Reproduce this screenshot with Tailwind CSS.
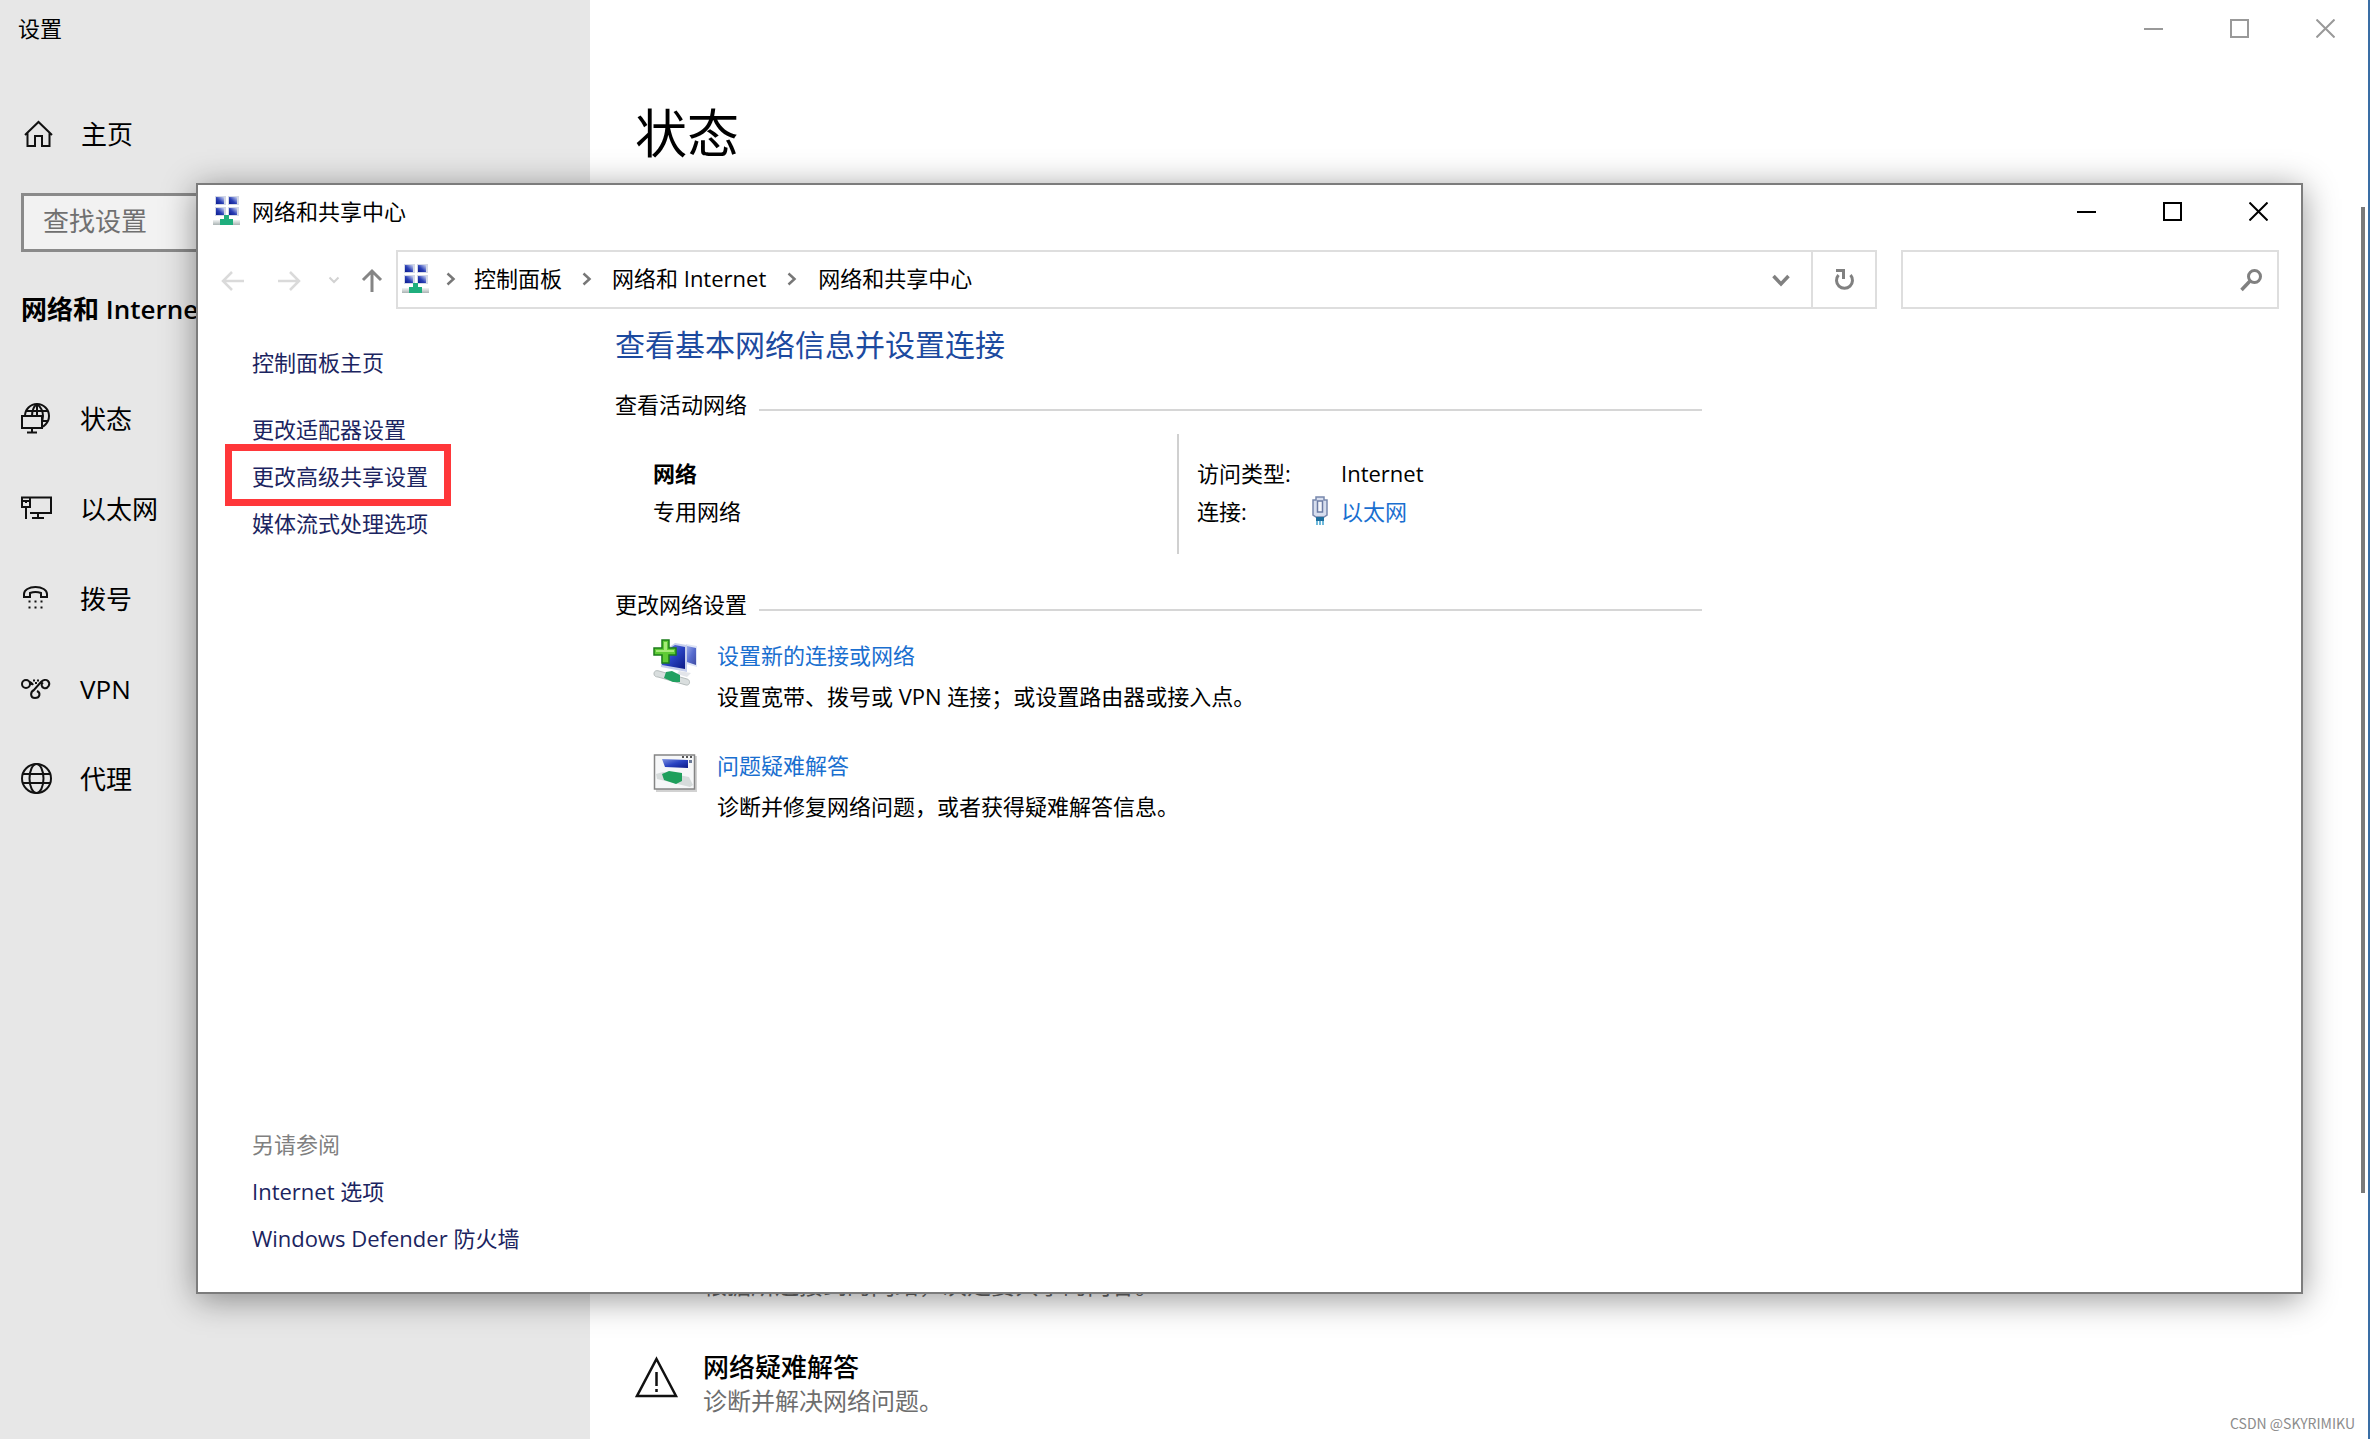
<!DOCTYPE html>
<html lang="zh-CN">
<head>
<meta charset="utf-8">
<meta name="viewport" content="width=device-width, initial-scale=1">
<title>设置</title>
<script src="https://cdn.jsdelivr.net/npm/@tailwindcss/browser@4"></script>
</head>
<body class="bg-white font-['Open_Sans','Noto_Sans_CJK_SC',sans-serif] text-black">

<!-- Shared symbols -->
<svg class="absolute size-0" aria-hidden="true">
  <defs>
    <linearGradient id="screen" x1="0" y1="1" x2="1" y2="0">
      <stop offset="0" stop-color="#0a1a8c"/><stop offset=".45" stop-color="#2a3fb5"/><stop offset="1" stop-color="#c9d3f3"/>
    </linearGradient>
    <linearGradient id="screenV" x1="0" y1="0" x2="1" y2="1">
      <stop offset="0" stop-color="#7f93e0"/><stop offset=".5" stop-color="#2943c2"/><stop offset="1" stop-color="#0c1a86"/>
    </linearGradient>
    <linearGradient id="pipe" x1="0" y1="0" x2="0" y2="1">
      <stop offset="0" stop-color="#f2f4f4"/><stop offset="1" stop-color="#a9b3b3"/>
    </linearGradient>
    <symbol id="monitor" viewBox="0 0 11 9">
      <path d="M0 0h11v9H0z" fill="#d3d8e6"/><path d="M1 1h8v7H1z" fill="url(#screen)"/>
    </symbol>
    <symbol id="network" viewBox="0 0 27 30">
      <use href="#monitor" x="2" y="0" width="11" height="9"/><use href="#monitor" x="15" y="0" width="11" height="9"/>
      <use href="#monitor" x="2" y="11" width="11" height="9"/><use href="#monitor" x="15" y="11" width="11" height="9"/>
      <path d="M0 24h27v5H0z" fill="url(#pipe)"/>
      <path d="M11 19h5v4h4v6H7v-6h4z" fill="#1fae7d"/>
    </symbol>
    <symbol id="min" viewBox="0 0 19 19"><path d="M0 10h19" stroke="currentColor" stroke-width="2"/></symbol>
    <symbol id="max" viewBox="0 0 19 19"><path d="M1 1h17v17H1z" fill="none" stroke="currentColor" stroke-width="2"/></symbol>
    <symbol id="close" viewBox="0 0 19 19"><path d="M.5 .5l18 18M18.500 .5l-18 18" stroke="currentColor" stroke-width="2"/></symbol>
    <symbol id="crumb" viewBox="0 0 12 16"><path d="M2.500 2.500L8.500 8l-6 5.500" fill="none" stroke="#777" stroke-width="2.500"/></symbol>
  </defs>
</svg>

<div class="relative flex min-h-screen border-r-2 border-[#3a6ea5]">

  <!-- Settings sidebar -->
  <aside class="w-[590px] shrink-0 bg-[#e7e7e7] text-[26px] leading-10">
    <div class="flex h-14 items-center pl-[18px] text-[22px]">设置</div>
    <a href="#" class="mt-12 flex h-[60px] items-center pl-[21px]">
      <svg class="mr-7 h-8 w-8" viewBox="0 0 32 32" fill="none" stroke="#111" stroke-width="2"><path d="M4 17L17.500 4 31 17M6.500 15v13H14v-10h7v10h7.500V15"/></svg>
      主页
    </a>
    <div class="mx-[21px] mt-[29px]">
      <input type="text" aria-label="查找设置" placeholder="查找设置" class="block h-[59px] w-full border-[3px] border-[#8a8a8a] bg-[#f2f2f2] px-[19px] pb-1 placeholder:text-[#707070]">
    </div>
    <h2 class="mt-[37px] h-10 pl-[21px] font-semibold">网络和 Internet</h2>
    <nav class="mt-[45px]">
      <a href="#" class="flex h-[90px] items-center pl-5">
        <svg class="mr-7 h-8 w-8" viewBox="0 0 32 32" fill="none" stroke="#111" stroke-width="2"><circle cx="17" cy="13" r="12"/><path d="M17 1c-4 3-5 7-5 12M17 1c5 4 6 8 6 12s-1 7-3 10M6 8h22M22 18h6M17 1v12"/><path d="M2 13h20v12H2z" fill="#e7e7e7"/><path d="M12 25v4M7 29.500h10"/></svg>
        状态
      </a>
      <a href="#" class="flex h-[90px] items-center pl-5">
        <svg class="mr-7 h-8 w-8" viewBox="0 0 32 32" fill="none" stroke="#111" stroke-width="2"><path d="M10 4.500h21V20H10M2 4.500h8V14H2zM3 8h6M6 8v2M6 14v12M18 20v5M12 25h12"/></svg>
        以太网
      </a>
      <a href="#" class="flex h-[90px] items-center pl-5">
        <svg class="mr-7 h-8 w-8" viewBox="0 0 32 32" fill="none" stroke="#111" stroke-width="2"><path d="M4 14v-3c0-4 5-7 11.500-7S27 7 27 11v3h-6v-4c-3-1-8-1-11 0v4z"/><path d="M8.500 18.500h2m4 0h2m4 0h2M8.500 24.500h2m4 0h2m4 0h2"/></svg>
        拨号
      </a>
      <a href="#" class="flex h-[90px] items-center pl-5">
        <svg class="mr-7 h-8 w-8" viewBox="0 0 32 32" fill="none" stroke="#111" stroke-width="2"><circle cx="6" cy="11" r="4"/><path d="M10 11h3M9 9c2 0 3 1 4 3"/><path d="M28 8c-2-2-5-1-7 1l-7 8c-4 2-4 8 1 8s6-5 2-7M28 8c3 3 0 8-4 7-3-1-3-4-1-5.500"/><path d="M13 7.500h2M17 7.500h2M15 10h2"/></svg>
        VPN
      </a>
      <a href="#" class="flex h-[90px] items-center pl-5">
        <svg class="mr-7 h-8 w-8" viewBox="0 0 32 32" fill="none" stroke="#111" stroke-width="2"><circle cx="16.500" cy="15.500" r="14.500"/><ellipse cx="16.500" cy="15.500" rx="7" ry="14.500"/><path d="M3 11h27M3 20h27"/></svg>
        代理
      </a>
    </nav>
  </aside>

  <!-- Settings page -->
  <main class="flex min-w-0 flex-1 flex-col">
    <div class="flex h-14 justify-end text-[#999]">
      <button type="button" aria-label="最小化" class="grid w-[86px] place-items-center"><svg class="size-[19px]"><use href="#min"/></svg></button>
      <button type="button" aria-label="最大化" class="grid w-[86px] place-items-center"><svg class="size-[19px]"><use href="#max"/></svg></button>
      <button type="button" aria-label="关闭" class="grid w-[86px] place-items-center"><svg class="size-[19px]"><use href="#close"/></svg></button>
    </div>
    <h1 class="mt-[37px] pl-[45px] text-[52px] leading-[80px]">状态</h1>
    <div class="mt-auto pb-[21px] pl-[45px] leading-[34px]">
      <p class="pl-[68px] text-[24px] text-[#666]">根据所连接到的网络，决定要共享的内容。</p>
      <a href="#" class="mt-12 flex">
        <svg class="mt-1 mr-6 h-11 w-11 shrink-0" viewBox="0 0 44 44" fill="none" stroke="#111" stroke-width="2.500"><path d="M21.500 5L41 42H2zM21.500 18v14M21.500 35v3"/></svg>
        <span>
          <span class="block text-[26px] font-medium">网络疑难解答</span>
          <span class="block text-[24px] text-[#6e6e6e]">诊断并解决网络问题。</span>
        </span>
      </a>
    </div>
  </main>

  <div class="absolute top-[207px] right-[3px] bottom-[246px] w-1 bg-[#7a7a7a]"></div>
  <div class="absolute right-[13px] bottom-1 font-['Noto_Sans_CJK_SC',sans-serif] text-[14px] leading-6 text-[#8c8c8c]">CSDN @SKYRIMIKU</div>

  <!-- Network and Sharing Center window -->
  <section class="absolute top-[183px] right-[65px] bottom-[145px] left-[196px] flex flex-col border-2 border-[#7c7c7c] bg-white text-[22px] shadow-[0_5px_32px_rgba(0,0,0,0.42)]">
    <header class="flex h-[52px] items-center">
      <svg class="ml-[15px] h-[30px] w-[27px]"><use href="#network"/></svg>
      <span class="ml-3 flex-1">网络和共享中心</span>
      <button type="button" aria-label="最小化" class="grid h-full w-[86px] place-items-center"><svg class="size-[19px]"><use href="#min"/></svg></button>
      <button type="button" aria-label="最大化" class="grid h-full w-[86px] place-items-center"><svg class="size-[19px]"><use href="#max"/></svg></button>
      <button type="button" aria-label="关闭" class="grid h-full w-[86px] place-items-center"><svg class="size-[19px]"><use href="#close"/></svg></button>
    </header>

    <div class="mt-[13px] flex h-[59px] items-center pr-[22px] pl-[23px]">
      <button type="button" aria-label="后退" class="mr-8"><svg class="size-6" viewBox="0 0 24 24" fill="none" stroke="#dadada" stroke-width="2.500"><path d="M23 13H3M11 4l-9 9 9 9"/></svg></button>
      <button type="button" aria-label="前进" class="mr-[27px]"><svg class="size-6" viewBox="0 0 24 24" fill="none" stroke="#dadada" stroke-width="2.500"><path d="M1 13h20M13 4l9 9-9 9"/></svg></button>
      <button type="button" aria-label="最近浏览的位置" class="mr-5"><svg class="size-3" viewBox="0 0 12 12" fill="none" stroke="#d2d2d2" stroke-width="2"><path d="M1.500 3.500L6 8l4.500-4.500"/></svg></button>
      <button type="button" aria-label="上移" class="mr-3"><svg class="size-6" viewBox="0 0 24 24" fill="none" stroke="#858585" stroke-width="3"><path d="M12 24V3M3 12l9-9 9 9"/></svg></button>

      <div class="flex h-full flex-1 items-center border-2 border-[#dedede] pb-[2px] pl-1">
        <svg class="h-[30px] w-[27px]"><use href="#network"/></svg>
        <svg class="mr-[17px] ml-4 h-4 w-3"><use href="#crumb"/></svg>
        <a href="#">控制面板</a>
        <svg class="mx-[19px] h-4 w-3"><use href="#crumb"/></svg>
        <a href="#">网络和 Internet</a>
        <svg class="mx-5 h-4 w-3"><use href="#crumb"/></svg>
        <a href="#">网络和共享中心</a>
        <button type="button" aria-label="以前的位置" class="ml-auto grid h-full w-[60px] place-items-center"><svg class="h-4 w-[18px]" viewBox="0 0 18 16" fill="none" stroke="#808080" stroke-width="3.500"><path d="M1.500 5L9 13l7.500-8"/></svg></button>
        <button type="button" aria-label="刷新" class="-mb-[2px] grid h-[55px] w-16 place-items-center border-l-2 border-[#dedede]"><svg class="size-6" viewBox="0 0 24 24" fill="none" stroke="#808080" stroke-width="3"><path d="M6.500 7a8 8 0 1 0 12 0M4 2.500h7.500V11"/></svg></button>
      </div>

      <div class="ml-6 flex h-full w-[378px] items-center border-2 border-[#dedede] pr-[14px]">
        <input type="search" aria-label="搜索控制面板" class="h-full min-w-0 flex-1 px-3 outline-none">
        <svg class="size-6" viewBox="0 0 24 24" fill="none" stroke="#808080"><circle cx="15.500" cy="8.500" r="6" stroke-width="3"/><path d="M11 13l-8.500 9" stroke-width="3.500"/></svg>
      </div>
    </div>

    <div class="flex min-h-0 flex-1">
      <aside class="flex w-[417px] shrink-0 flex-col pt-[30px] pb-[30px] pl-[54px] leading-[47px] text-[#1b2460]">
        <a href="#">控制面板主页</a>
        <nav class="mt-5 flex flex-col items-start">
          <a href="#">更改适配器设置</a>
          <a href="#" class="relative">更改高级共享设置<span class="absolute -top-[9px] -right-[23px] -bottom-[6px] -left-[27px] border-[7px] border-[#ff373a]"></span></a>
          <a href="#">媒体流式处理选项</a>
        </nav>
        <div class="mt-auto flex flex-col items-start">
          <span class="text-[#808080]">另请参阅</span>
          <a href="#">Internet 选项</a>
          <a href="#">Windows Defender 防火墙</a>
        </div>
      </aside>

      <div class="w-full max-w-[1087px] pt-4">
        <h2 class="text-[30px] leading-10 text-[#1c4a9f]">查看基本网络信息并设置连接</h2>

        <div class="mt-6 flex items-center gap-3 leading-[30px]">
          <h3>查看活动网络</h3><div class="mt-3 h-[2px] flex-1 bg-[#d6d6d6]"></div>
        </div>
        <div class="mt-[15px] flex h-[120px] leading-[38px]">
          <div class="w-[562px] pt-5 pl-[38px]">
            <p class="font-bold">网络</p>
            <p>专用网络</p>
          </div>
          <dl class="grid flex-1 grid-cols-[114px_30px_1fr] content-start border-l-2 border-[#d0d0d0] pt-5 pl-[18px]">
            <dt>访问类型:</dt><dd class="col-start-3">Internet</dd>
            <dt>连接:</dt>
            <dd class="col-span-2 flex items-center">
              <svg class="mr-3 h-[30px] w-[18px]" viewBox="0 0 18 30"><path d="M5 1h8v3h3v15l-3 2H5l-3-2V4h3z" fill="#d7deee" stroke="#7888ad" stroke-width="1.500"/><path d="M6.500 5h5v11h-5z" fill="#f4f6fb" stroke="#6b7ba3" stroke-width="1.500"/><path d="M5 21h8v4H5z" fill="#1d6f9e"/><path d="M6 25v4M9 25v4M12 25v4" stroke="#3fa3cf" stroke-width="1.500"/></svg>
              <a href="#" class="text-[#1a6fd0]">以太网</a>
            </dd>
          </dl>
        </div>

        <div class="mt-[35px] flex items-center gap-3 leading-[30px]">
          <h3>更改网络设置</h3><div class="mt-3 h-[2px] flex-1 bg-[#d6d6d6]"></div>
        </div>
        <div class="mt-4 flex pl-[38px] leading-[41px]">
          <svg class="mt-1 mr-4 h-12 w-12 shrink-0" viewBox="0 0 48 48">
            <path d="M33 5l11 2v21l-11-3z" fill="#dfe5f6"/><path d="M34 7l9 2v17l-9-3z" fill="url(#screenV)" opacity=".75"/>
            <path d="M22 4l12 2v27L8 28V14z" fill="#c6cfec"/><path d="M22 6l10 2v22L9 26V14z" fill="url(#screenV)"/>
            <path d="M26 32l12 2-4 4-10-3z" fill="#e3e5ea"/>
            <path d="M1 35c0-3 2-4 5-3l28 8c4 1 3 7-1 6L5 38c-2 0-4-1-4-3z" fill="#d9dede" stroke="#b5bcbc"/>
            <path d="M13 33l6-1 8 4v7h-7l-9-4z" fill="#22a060"/>
            <path d="M9 1h7v8h7v7h-7v8H9v-8H1V9h8z" fill="#5fcb35" stroke="#1d7d1b" stroke-width="1.500"/>
            <path d="M11 3h3v8h7v2H3v-2h8z" fill="#a5ea79"/>
          </svg>
          <div>
            <a href="#" class="text-[#1a6fd0]">设置新的连接或网络</a>
            <p>设置宽带、拨号或 VPN 连接；或设置路由器或接入点。</p>
          </div>
        </div>
        <div class="mt-7 flex pl-[38px] leading-[41px]">
          <svg class="mt-1 mr-4 h-12 w-12 shrink-0" viewBox="0 0 48 48">
            <path d="M3 7h41v36H3z" fill="#d2d2d2"/>
            <path d="M1.500 6h40v34h-40z" fill="#f6f7f8" stroke="#858585" stroke-width="1.500"/>
            <path d="M29 8h2m2 0h2m2 0h2" stroke="#555" stroke-width="2"/>
            <path d="M9 10l26 1v8l-23-1z" fill="url(#screenV)"/><path d="M36 11h3v3h-3z" fill="#6b7a96"/>
            <path d="M3 25l7-2 26 5 4 8-3 2-33-8z" fill="#d6dbdb"/>
            <path d="M9 25l7-3 13 2v8l-6 3-12-4z" fill="#1f9f5c"/>
          </svg>
          <div>
            <a href="#" class="text-[#1a6fd0]">问题疑难解答</a>
            <p>诊断并修复网络问题，或者获得疑难解答信息。</p>
          </div>
        </div>
      </div>
    </div>
  </section>
</div>
</body>
</html>
